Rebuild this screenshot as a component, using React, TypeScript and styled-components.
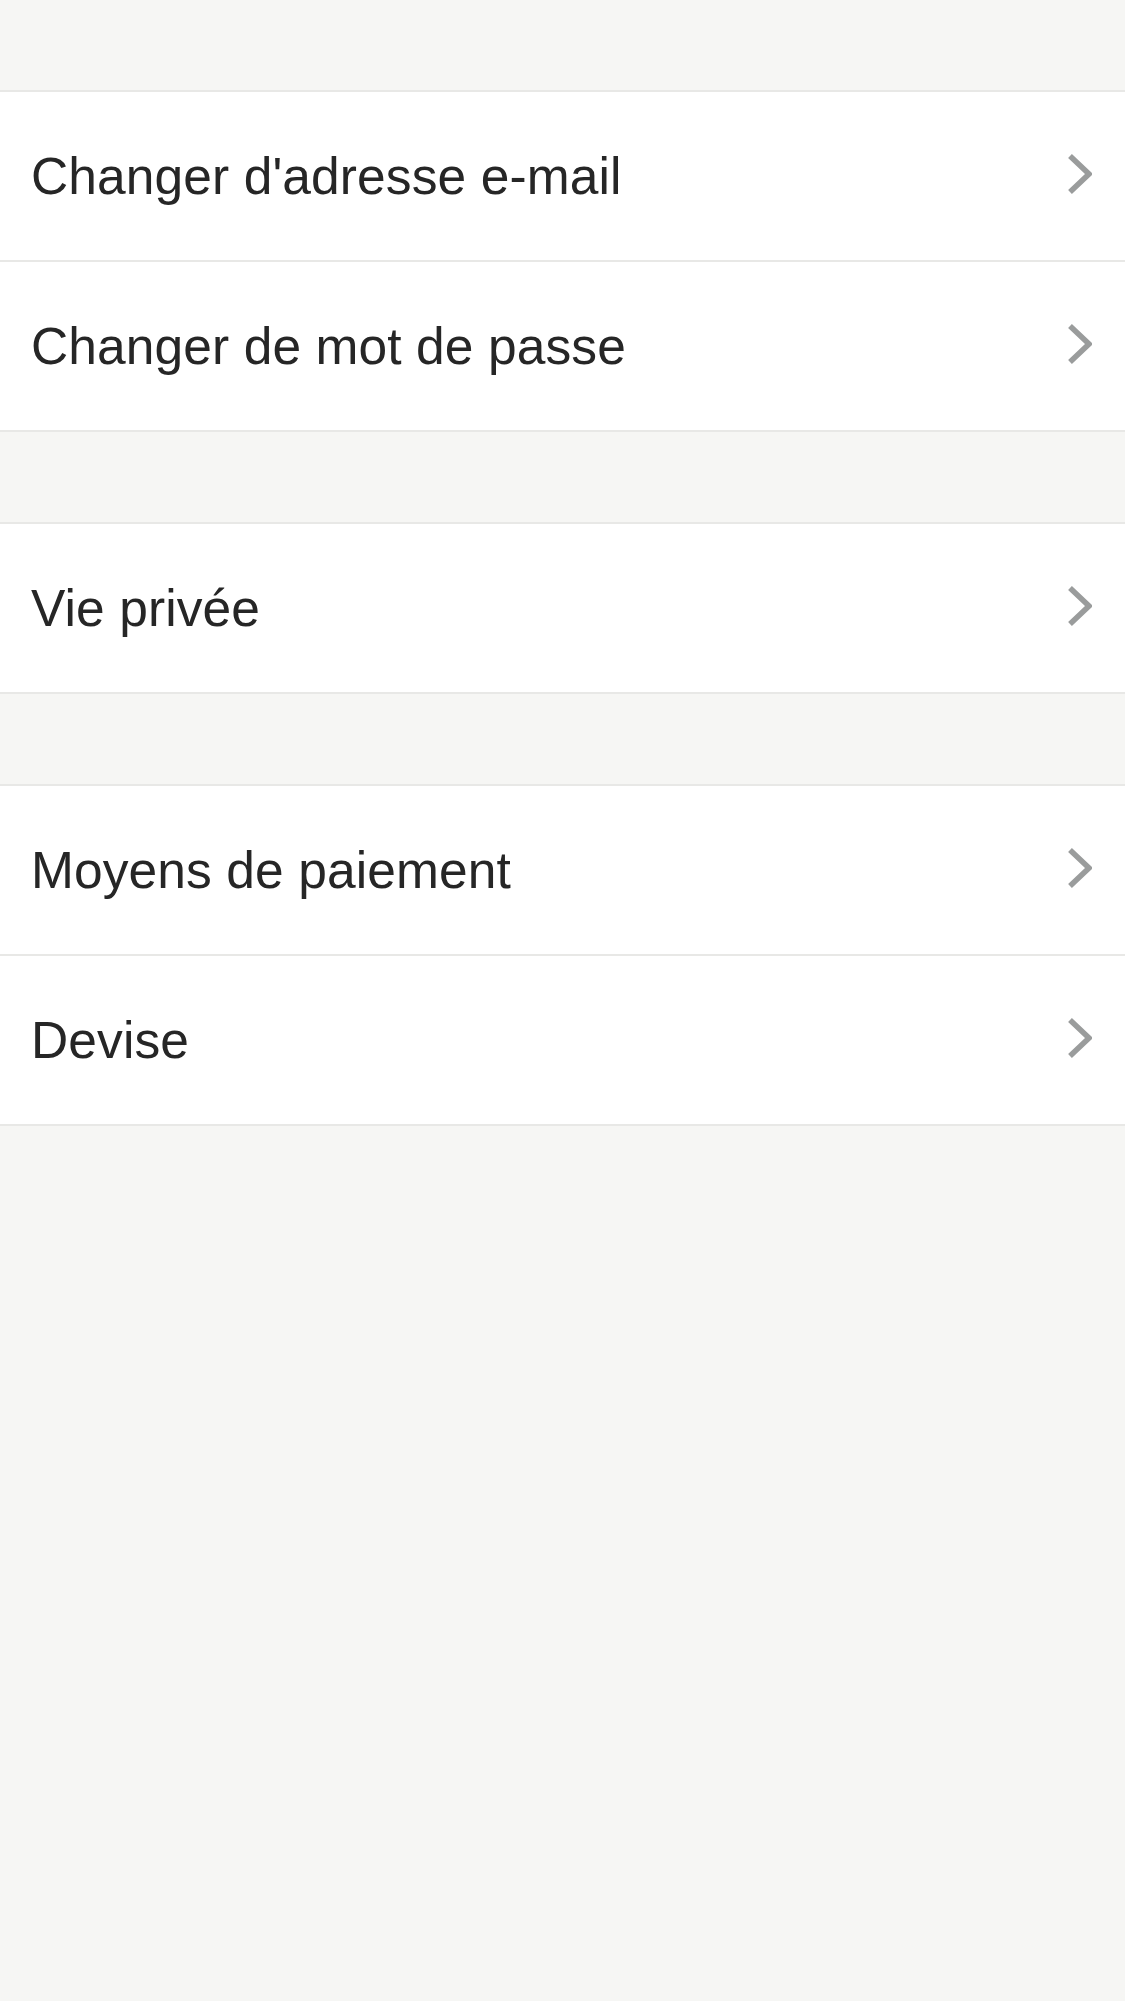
import * as React from 'react';
import styled, { createGlobalStyle } from 'styled-components';

const GlobalStyle = createGlobalStyle`
    html, body {
        margin: 0;
        padding: 0;
        background-color: #f6f6f4;
    }
    body {
        font-family: 'Liberation Sans', Arial, sans-serif;
        -webkit-font-smoothing: antialiased;
    }
`;

const Page = styled.div`
    min-height: 2001px;
    background-color: #f6f6f4;
    padding-top: 90px;
    box-sizing: border-box;
`;

const Group = styled.ul`
    list-style: none;
    margin: 0 0 90px 0;
    padding: 0;
    background-color: #ffffff;
    border-top: 2px solid #e8e8e6;
`;

const Row = styled.li`
    display: flex;
    align-items: center;
    justify-content: space-between;
    height: 168px;
    padding: 0 33px 0 31px;
    border-bottom: 2px solid #e8e8e6;
    cursor: pointer;
`;

const Label = styled.span`
    font-size: 51.5px;
    color: #262626;
    letter-spacing: 0.1px;
`;

const Chevron = styled.svg`
    width: 24px;
    height: 40px;
    margin-top: -4px;
    flex-shrink: 0;
`;

const ChevronIcon: React.FC = () => (
    <Chevron viewBox="0 0 24 40">
        <polyline points="2,2 21,20 2,38" fill="none" stroke="#9a9c9c" strokeWidth="5.5" />
    </Chevron>
);

const groups: string[][] = [
    ["Changer d'adresse e-mail", 'Changer de mot de passe'],
    ['Vie privée'],
    ['Moyens de paiement', 'Devise'],
];

const App: React.FC = () => {
    return (
        <Page>
            <GlobalStyle />
            {groups.map((items, i) => (
                <Group key={i}>
                    {items.map(label => (
                        <Row key={label}>
                            <Label>{label}</Label>
                            <ChevronIcon />
                        </Row>
                    ))}
                </Group>
            ))}
        </Page>
    );
};

export default App;
